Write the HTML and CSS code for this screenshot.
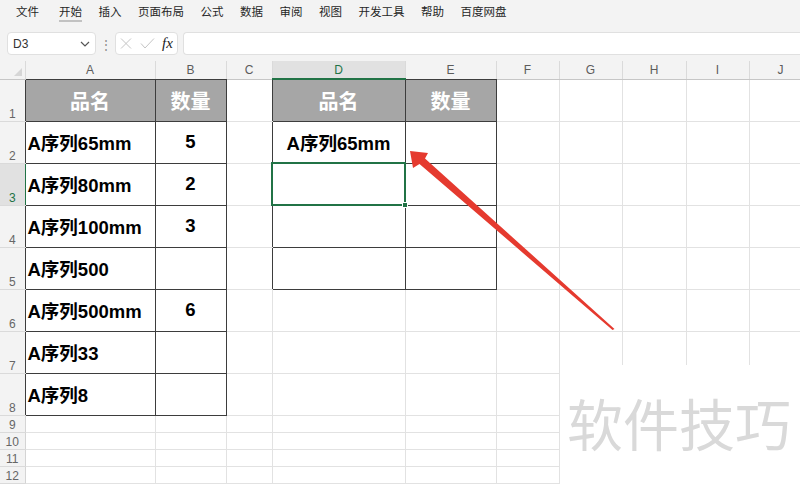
FILE: index.html
```html
<!DOCTYPE html>
<html>
<head>
<meta name="viewport" content="width=device-width, initial-scale=1">
<link rel="stylesheet" href="styles.css">
</head>
<body>
<div class="page">

  <!-- ribbon tabs -->
  <div class="menubar">
    <span class="menu first">文件</span>
    <span class="menu active">开始</span>
    <span class="menu">插入</span>
    <span class="menu">页面布局</span>
    <span class="menu">公式</span>
    <span class="menu">数据</span>
    <span class="menu">审阅</span>
    <span class="menu">视图</span>
    <span class="menu">开发工具</span>
    <span class="menu">帮助</span>
    <span class="menu">百度网盘</span>
  </div>

  <!-- name box + formula bar -->
  <div class="formulabar">
    <div class="namebox">
      <span>D3</span>
      <svg class="chev" width="10" height="6" viewBox="0 0 10 6"><path d="M1 1 L5 5 L9 1" fill="none" stroke="#555" stroke-width="1.2"/></svg>
    </div>
    <span class="dots">⋮</span>
    <div class="fxbox">
      <svg width="12" height="11" viewBox="0 0 12 11"><path d="M1 0.5 L11 10.5 M11 0.5 L1 10.5" stroke="#c4c4c4" stroke-width="1"/></svg>
      <svg width="15" height="11" viewBox="0 0 15 11"><path d="M1 5.5 L5 10 L14 0.5" fill="none" stroke="#c4c4c4" stroke-width="1"/></svg>
      <span class="fx">fx</span>
    </div>
    <div class="input"></div>
  </div>

  <!-- sheet -->
  <div class="sheet">
    <table class="grid">
      <colgroup>
        <col class="c-rh"><col class="c-a"><col class="c-b"><col class="c-c"><col class="c-d"><col class="c-e">
        <col class="c-f"><col class="c-g"><col class="c-h"><col class="c-i"><col class="c-j">
      </colgroup>
      <tr class="colhead">
        <th class="corner"><span class="tri"></span></th>
        <th class="dk">A</th><th class="dk">B</th><th>C</th><th class="sel">D</th><th class="dk">E</th>
        <th>F</th><th>G</th><th>H</th><th>I</th><th>J</th>
      </tr>
      <tr class="tall">
        <th class="rh dk">1</th>
        <td class="b hd">品名</td><td class="b hd">数量</td><td class="edge"></td><td class="b hd">品名</td><td class="b hd">数量</td>
        <td></td><td></td><td></td><td></td><td></td>
      </tr>
      <tr class="tall">
        <th class="rh dk">2</th>
        <td class="b txt">A序列65mm</td><td class="b num">5</td><td class="edge"></td><td class="b num">A序列65mm</td><td class="b"></td>
        <td></td><td></td><td></td><td></td><td></td>
      </tr>
      <tr class="tall">
        <th class="rh dk sel">3</th>
        <td class="b txt">A序列80mm</td><td class="b num">2</td><td class="edge"></td><td class="b sel"><span class="handle"></span></td><td class="b"></td>
        <td></td><td></td><td></td><td></td><td></td>
      </tr>
      <tr class="tall">
        <th class="rh dk">4</th>
        <td class="b txt">A序列100mm</td><td class="b num">3</td><td class="edge"></td><td class="b"></td><td class="b"></td>
        <td></td><td></td><td></td><td></td><td></td>
      </tr>
      <tr class="tall">
        <th class="rh dk">5</th>
        <td class="b txt">A序列500</td><td class="b num"></td><td class="edge"></td><td class="b"></td><td class="b"></td>
        <td></td><td></td><td></td><td></td><td></td>
      </tr>
      <tr class="tall">
        <th class="rh dk">6</th>
        <td class="b txt">A序列500mm</td><td class="b num">6</td><td></td><td></td><td></td>
        <td></td><td></td><td></td><td></td><td></td>
      </tr>
      <tr class="tall">
        <th class="rh dk">7</th>
        <td class="b txt">A序列33</td><td class="b num"></td><td></td><td></td><td></td>
        <td></td><td></td><td></td><td></td><td></td>
      </tr>
      <tr class="tall">
        <th class="rh dk">8</th>
        <td class="b txt">A序列8</td><td class="b num"></td><td></td><td></td><td></td>
        <td></td><td></td><td></td><td></td><td></td>
      </tr>
      <tr class="short">
        <th class="rh">9</th>
        <td></td><td></td><td></td><td></td><td></td><td></td><td></td><td></td><td></td><td></td>
      </tr>
      <tr class="short">
        <th class="rh">10</th>
        <td></td><td></td><td></td><td></td><td></td><td></td><td></td><td></td><td></td><td></td>
      </tr>
      <tr class="short">
        <th class="rh">11</th>
        <td></td><td></td><td></td><td></td><td></td><td></td><td></td><td></td><td></td><td></td>
      </tr>
      <tr class="short">
        <th class="rh">12</th>
        <td></td><td></td><td></td><td></td><td></td><td></td><td></td><td></td><td></td><td></td>
      </tr>
      <tr class="short">
        <th class="rh"></th>
        <td></td><td></td><td></td><td></td><td></td><td></td><td></td><td></td><td></td><td></td>
      </tr>
    </table>
  </div>

  <!-- watermark and annotation over the sheet -->
  <div class="watermark">软件技巧</div>
  <svg class="arrow" width="800" height="484" viewBox="0 0 800 484">
    <polygon points="410,151 428,153 425,158.5 614.5,329 612.5,330 419.5,164 413,168" fill="#e53a2f"/>
  </svg>

</div>
</body>
</html>
```

FILE: styles.css
```css
* {box-sizing: border-box}

body {
  margin: 0;
  font-family: "Noto Sans CJK SC", sans-serif;
  color: #222;
}

.page {
  position: relative;
  width: 800px;
  height: 484px;
  overflow: hidden;
  background: #f3f3f3;
}

/* Ribbon tabs */
.menubar {
  display: flex;
  align-items: center;
  height: 24px;
  padding-left: 16px;
  gap: 16.5px;
  font-size: 11.5px;
}

.menu {
  line-height: 17px;
  border-bottom: 2px solid transparent;
  color: #262626;
}

.menu.first {
  margin-right: 3.5px;
}

.menu.active {
  border-bottom-color: #c2c2c2;
}

/* Formula bar */
.formulabar {
  display: flex;
  align-items: center;
  height: 37px;
  padding: 2px 0 0 7px;
}

.namebox,
.fxbox,
.input {
  height: 23px;
  background: #fff;
  border: 1px solid #e0e0e0;
  border-radius: 4px;
}

.namebox {
  display: flex;
  align-items: center;
  justify-content: space-between;
  width: 89px;
  padding: 0 5px 0 5px;
  font-family: "Liberation Sans", sans-serif;
  font-size: 12px;
  color: #333;
}

.chev {
  margin-top: 1px;
}

.dots {
  width: 19px;
  text-align: center;
  font-size: 12px;
  color: #888;
}

.fxbox {
  display: flex;
  align-items: center;
  width: 63px;
  padding-left: 4px;
  gap: 8px;
}

.fx {
  font-family: "Liberation Serif", serif;
  font-style: italic;
  font-size: 15px;
  color: #222;
  margin-left: -1px;
}

.input {
  flex: 1;
  margin-left: 5px;
  border-right: none;
  border-radius: 4px 0 0 4px;
}

/* Sheet grid */
.sheet {
  background: #fff;
}

.grid {
  border-collapse: collapse;
  table-layout: fixed;
  width: 812px;
}

.c-rh {width: 25px;}
.c-a {width: 130px;}
.c-b {width: 71px;}
.c-c {width: 46px;}
.c-d {width: 133px;}
.c-e {width: 91px;}
.c-f {width: 63px;}
.c-g {width: 63px;}
.c-h {width: 64px;}
.c-i {width: 63px;}
.c-j {width: 63px;}

.grid td {
  border: 1px solid #e2e2e2;
  padding: 0;
  background: #fff;
  font-family: "Liberation Sans", "Noto Sans CJK SC", sans-serif;
  font-weight: bold;
  font-size: 18.5px;
  color: #000;
}

.colhead th {
  height: 18px;
  padding: 0;
  background: #f3f3f3;
  border-right: 1px solid #dadada;
  border-bottom: 1px solid #c6c6c6;
  font-family: "Liberation Sans", sans-serif;
  font-weight: normal;
  font-size: 12px;
  color: #5c5c5c;
}

.colhead th.dk {
  border-bottom-color: #3d3d3d;
}

.colhead th.sel {
  background: #e1e1e1;
  color: #217346;
  border-bottom: 2px solid #217346;
}

.corner {
  position: relative;
}

.tri {
  position: absolute;
  right: 3px;
  bottom: 3px;
  width: 0;
  height: 0;
  border-left: 8px solid transparent;
  border-bottom: 8px solid #d6d6d6;
}

.tall td,
.tall th {
  height: 42px;
}

.short td,
.short th {
  height: 17px;
}

.rh {
  padding: 0;
  background: #f3f3f3;
  border-right: 1px solid #d4d4d4;
  border-bottom: 1px solid #dadada;
  vertical-align: bottom;
  text-align: center;
  font-family: "Liberation Sans", sans-serif;
  font-weight: normal;
  font-size: 12px;
  line-height: 14px;
  color: #666;
}

.rh.dk {
  border-right-color: #3d3d3d;
}

.rh.sel {
  background: #e1e1e1;
  color: #217346;
  border-right-color: #217346;
}

/* bordered table cells */
.grid td.b {
  border: 1px solid #3d3d3d;
}

.grid td.edge {
  border-right: 1px solid #3d3d3d;
}

.grid td.hd {
  background: #a6a6a6;
  color: #fff;
  text-align: center;
  font-family: "Noto Sans CJK SC", sans-serif;
  font-size: 20px;
}

.grid td.txt {
  padding-left: 2px;
  white-space: nowrap;
}

.grid td.num {
  text-align: center;
  white-space: nowrap;
}

.grid td.sel {
  position: relative;
  border: 2px solid #217346;
}

.handle {
  position: absolute;
  right: -4px;
  bottom: -4px;
  width: 6px;
  height: 6px;
  background: #217346;
  border: 1px solid #fff;
}

/* Overlays */
.watermark {
  position: absolute;
  left: 560px;
  top: 365px;
  width: 240px;
  height: 119px;
  padding: 29px 0 0 7px;
  background: #fff;
  font-size: 56px;
  line-height: 56px;
  color: #d9d9d9;
  white-space: nowrap;
}

.arrow {
  position: absolute;
  left: 0;
  top: 0;
}
```
